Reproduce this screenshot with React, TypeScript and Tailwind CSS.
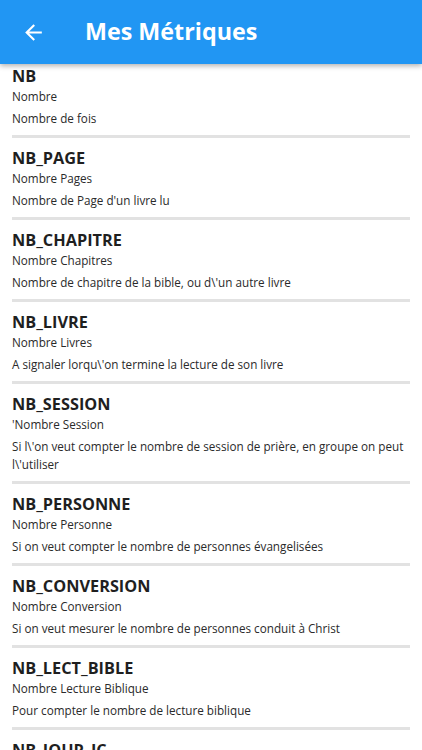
import React from 'react';

type Metrique = {
    code: string;
    libelle: string;
    description: string;
};

const metriques: Metrique[] = [
    { code: 'NB', libelle: 'Nombre', description: 'Nombre de fois' },
    { code: 'NB_PAGE', libelle: 'Nombre Pages', description: "Nombre de Page d'un livre lu" },
    { code: 'NB_CHAPITRE', libelle: 'Nombre Chapitres', description: "Nombre de chapitre de la bible, ou d\\'un autre livre" },
    { code: 'NB_LIVRE', libelle: 'Nombre Livres', description: "A signaler lorqu\\'on termine la lecture de son livre" },
    { code: 'NB_SESSION', libelle: "'Nombre Session", description: "Si l\\'on veut compter le nombre de session de prière, en groupe on peut l\\'utiliser" },
    { code: 'NB_PERSONNE', libelle: 'Nombre Personne', description: 'Si on veut compter le nombre de personnes évangelisées' },
    { code: 'NB_CONVERSION', libelle: 'Nombre Conversion', description: 'Si on veut mesurer le nombre de personnes conduit à Christ' },
    { code: 'NB_LECT_BIBLE', libelle: 'Nombre Lecture Biblique', description: 'Pour compter le nombre de lecture biblique' },
    { code: 'NB_JOUR_JC', libelle: 'Nombre Jours', description: 'Nombre de jours' },
];

const App: React.FC = () => {
    return (
        <div className="h-[750px] overflow-hidden bg-white" style={{ fontFamily: '"Open Sans", "Noto Sans", sans-serif' }}>
            {/* Header */}
            <div className="relative z-10 flex h-[64px] items-center bg-[#2196f3] shadow-[0_2px_5px_rgba(0,0,0,0.3)]">
                <div className="flex w-[85px] items-center pl-[21px]">
                    <svg width="25" height="25" viewBox="0 0 24 24" fill="#ffffff">
                        <path d="M20 11H7.83l5.59-5.59L12 4l-8 8 8 8 1.41-1.41L7.83 13H20v-2z" />
                    </svg>
                </div>
                <h1 className="text-[23.3px] font-bold leading-none text-white">Mes Métriques</h1>
            </div>

            {/* Liste */}
            <div className="px-[12px]">
                {metriques.map((m, index) => (
                    <div
                        key={m.code}
                        className={`border-b-[3px] border-[#e2e2e2] pb-[8px] ${index === 0 ? 'pt-px' : 'pt-[9px]'}`}
                    >
                        <div className="text-[16.3px] font-bold leading-[22px] text-[#1f1f1f]">{m.code}</div>
                        <div className="text-[11.7px] leading-[18px] text-[#2a2a2a]">{m.libelle}</div>
                        <div className="mt-[4px] text-[11.7px] leading-[18px] text-[#2a2a2a]">{m.description}</div>
                    </div>
                ))}
            </div>
        </div>
    );
};

export default App;
